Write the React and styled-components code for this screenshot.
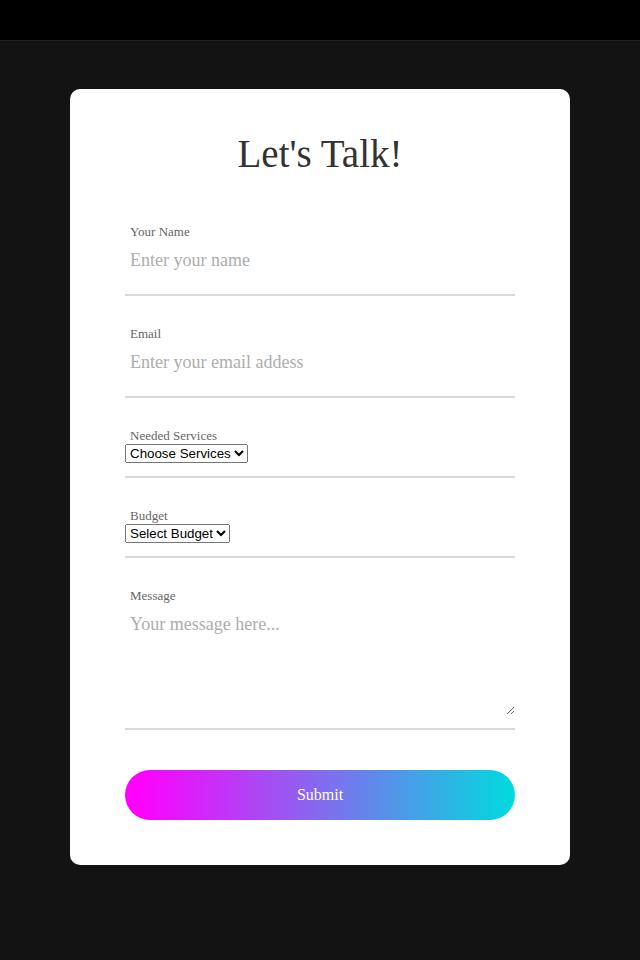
import React from "react";
import styled, { createGlobalStyle } from "styled-components";

const GlobalStyle = createGlobalStyle`
  *, *::before, *::after { box-sizing: border-box; }
  body { margin: 0; background: #131313; font-family: "Liberation Serif", "Times New Roman", serif; }
`;

const TopBar = styled.header`
  height: 41px;
  background: #000;
  border-bottom: 1px solid #212126;
`;

const Main = styled.main`
  min-height: calc(100vh - 41px);
  padding: 48px 16px 95px;
`;

const Card = styled.form`
  max-width: 500px;
  margin: 0 auto;
  padding: 41px 55px 45px;
  background: #fff;
  border-radius: 10px;
`;

const Title = styled.h1`
  margin: 0 0 45px;
  font-size: 39px;
  font-weight: 400;
  line-height: 48px;
  text-align: center;
  color: #333;
`;

const Field = styled.div`
  margin-bottom: 29px;
  padding-bottom: 13px;
  border-bottom: 2px solid #d9d9d9;
`;

const Label = styled.label`
  display: block;
  padding: 0 5px;
  font-size: 13px;
  line-height: 17px;
  color: #666;
`;

const TextInput = styled.input`
  display: block;
  width: 100%;
  height: 41px;
  padding: 0 5px;
  border: 0;
  outline: none;
  background: transparent;
  font: 18px "Liberation Serif", "Times New Roman", serif;
  color: #555;
  &::placeholder { color: #adadad; }
`;

const Select = styled.select`
  display: block;
  height: 19px;
  font-family: "Liberation Sans", Arial, sans-serif;
`;

const TextArea = styled.textarea`
  display: block;
  width: 100%;
  height: 111px;
  padding: 10px 5px 0;
  border: 0;
  outline: none;
  background: transparent;
  font: 18px/20px "Liberation Serif", "Times New Roman", serif;
  color: #555;
  resize: vertical;
  &::placeholder { color: #adadad; }
`;

const Submit = styled.button`
  display: block;
  width: 100%;
  height: 50px;
  margin-top: 40px;
  border: 0;
  border-radius: 25px;
  background: linear-gradient(to right, #f0f 3%, #00dbde 100%);
  font: 16px "Liberation Serif", "Times New Roman", serif;
  color: #fff;
  cursor: pointer;
`;

export default function App() {
  return (
    <>
      <GlobalStyle />
      <TopBar />
      <Main>
        <Card onSubmit={(e) => e.preventDefault()}>
          <Title>Let's Talk!</Title>
          <Field>
            <Label htmlFor="name">Your Name</Label>
            <TextInput id="name" type="text" placeholder="Enter your name" />
          </Field>
          <Field>
            <Label htmlFor="email">Email</Label>
            <TextInput id="email" type="email" placeholder="Enter your email addess" />
          </Field>
          <Field>
            <Label htmlFor="services">Needed Services</Label>
            <Select id="services"><option>Choose Services</option></Select>
          </Field>
          <Field>
            <Label htmlFor="budget">Budget</Label>
            <Select id="budget"><option>Select Budget</option></Select>
          </Field>
          <Field>
            <Label htmlFor="message">Message</Label>
            <TextArea id="message" placeholder="Your message here..." />
          </Field>
          <Submit type="submit">Submit</Submit>
        </Card>
      </Main>
    </>
  );
}
